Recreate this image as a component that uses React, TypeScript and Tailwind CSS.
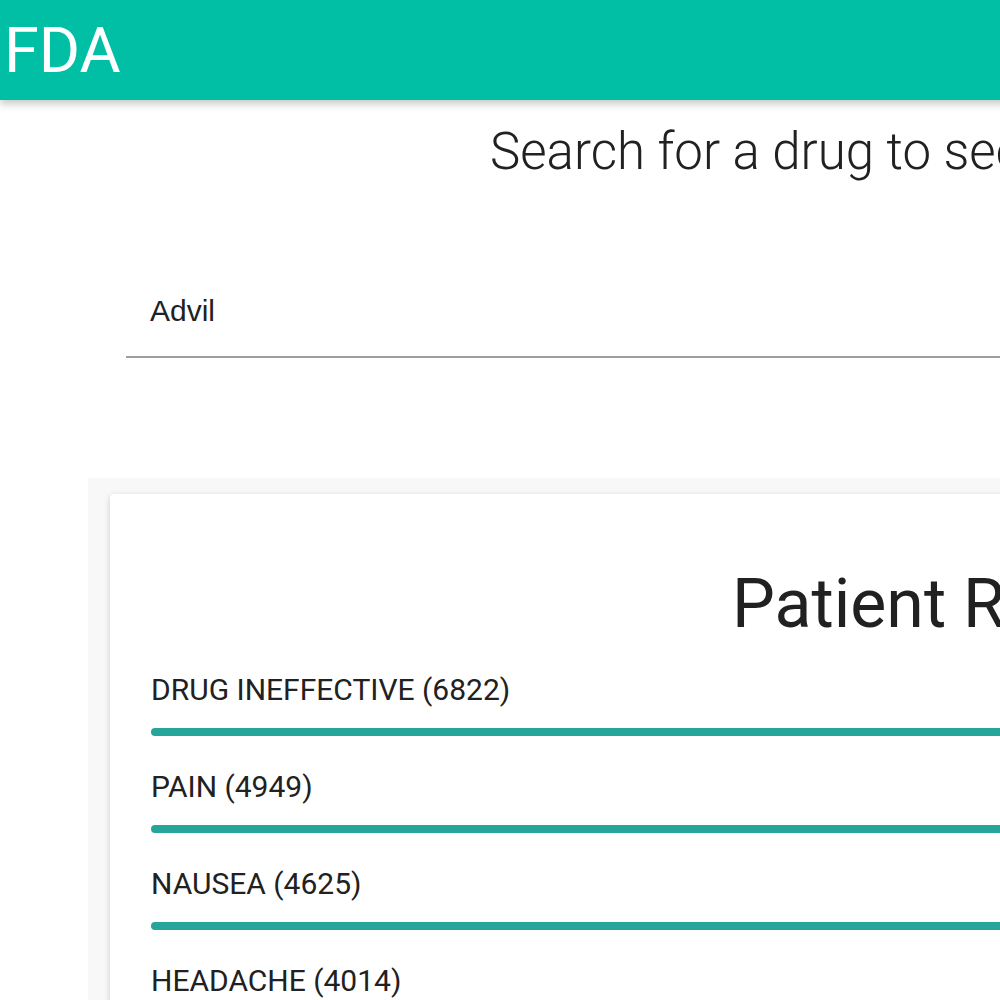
import React from "react";

const items = [
  { label: "DRUG INEFFECTIVE (6822)" },
  { label: "PAIN (4949)" },
  { label: "NAUSEA (4625)" },
  { label: "HEADACHE (4014)" },
];

export default function App() {
  return (
    <div className="w-[1000px] h-[1000px] overflow-hidden bg-white" style={{ fontFamily: "Roboto, 'Noto Sans', sans-serif" }}>
      <div className="w-[1932px]">
        <header className="relative z-10 h-[100px] bg-[#01bfa5] shadow-[0_4px_8px_rgba(0,0,0,0.22)] flex items-center pl-[4px]">
          <span className="text-white text-[63px] leading-none font-normal">FDA</span>
        </header>
        <div className="pt-[22px] pl-[490px]">
          <h3 className="text-[51px] font-light text-[#212121] leading-[60px] whitespace-nowrap">
            Search for a drug to see its side effects
          </h3>
        </div>
        <div className="mx-[126px] mt-[100px] border-b-2 border-[#9e9e9e] h-[76px] flex items-start pt-[11px] pl-[24px]">
          <span className="text-[30px] leading-[36px] text-[#212121]" style={{ fontFamily: "'Liberation Sans', Arial, sans-serif" }}>Advil</span>
        </div>
        <div className="mx-[88px] mt-[120px] bg-[#f8f8f8] px-[22px] pt-[16px]">
          <div className="bg-white rounded-[4px] shadow-[0_2px_6px_rgba(0,0,0,0.18)] px-[41px] pt-[68px] pb-[40px]">
            <h2 className="text-center text-[68px] leading-[84px] text-[#212121] font-normal">Patient Reports</h2>
            <div className="mt-[24px] flex flex-col">
              {items.map((it) => (
                <div key={it.label} className="h-[97px] flex flex-col">
                  <div className="text-[30px] leading-[40px] text-[#212121]">{it.label}</div>
                  <div className="mt-[18px] h-[8px] rounded-full bg-[#26a69a]" />
                </div>
              ))}
            </div>
          </div>
        </div>
      </div>
    </div>
  );
}
